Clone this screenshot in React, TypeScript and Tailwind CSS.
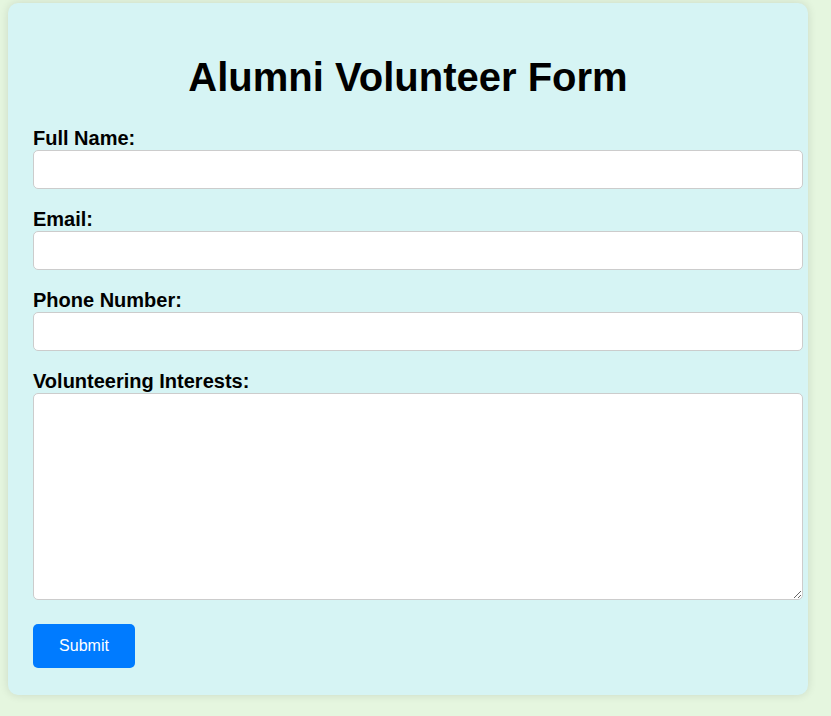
import React from "react";

const fields = [
  { label: "Full Name:", type: "text" },
  { label: "Email:", type: "email" },
  { label: "Phone Number:", type: "tel" },
];

export default function App() {
  return (
    <div
      className="min-h-[716px] bg-[#e5f6df] pl-[8px] pt-[3px]"
      style={{ fontFamily: '"Liberation Sans", Arial, sans-serif' }}
    >
      <div className="w-[800px] rounded-[10px] bg-[#d6f4f4] px-[25px] pt-[20px] pb-[27px] shadow-[0_0_10px_rgba(0,0,0,0.12)]">
        <h1 className="mt-[31px] mb-[26px] text-center text-[40px] font-bold leading-[46px] text-black">
          Alumni Volunteer Form
        </h1>
        <form onSubmit={(e) => e.preventDefault()}>
          {fields.map((f) => (
            <div key={f.label}>
              <label className="block text-[20px] font-bold leading-[24px] text-black">
                {f.label}
              </label>
              <input
                type={f.type}
                className="mb-[18px] block h-[39px] w-[770px] rounded-[5px] border border-[#cccccc] bg-white px-[10px] text-[16px] outline-none"
              />
            </div>
          ))}
          <label className="block text-[20px] font-bold leading-[24px] text-black">
            Volunteering Interests:
          </label>
          <textarea className="block h-[207px] w-[770px] rounded-[5px] border border-[#cccccc] bg-white px-[10px] py-[10px] text-[16px] outline-none" />
          <button
            type="submit"
            className="mt-[24px] block h-[44px] w-[102px] rounded-[5px] bg-[#007bff] text-[16px] text-white"
          >
            Submit
          </button>
        </form>
      </div>
    </div>
  );
}
